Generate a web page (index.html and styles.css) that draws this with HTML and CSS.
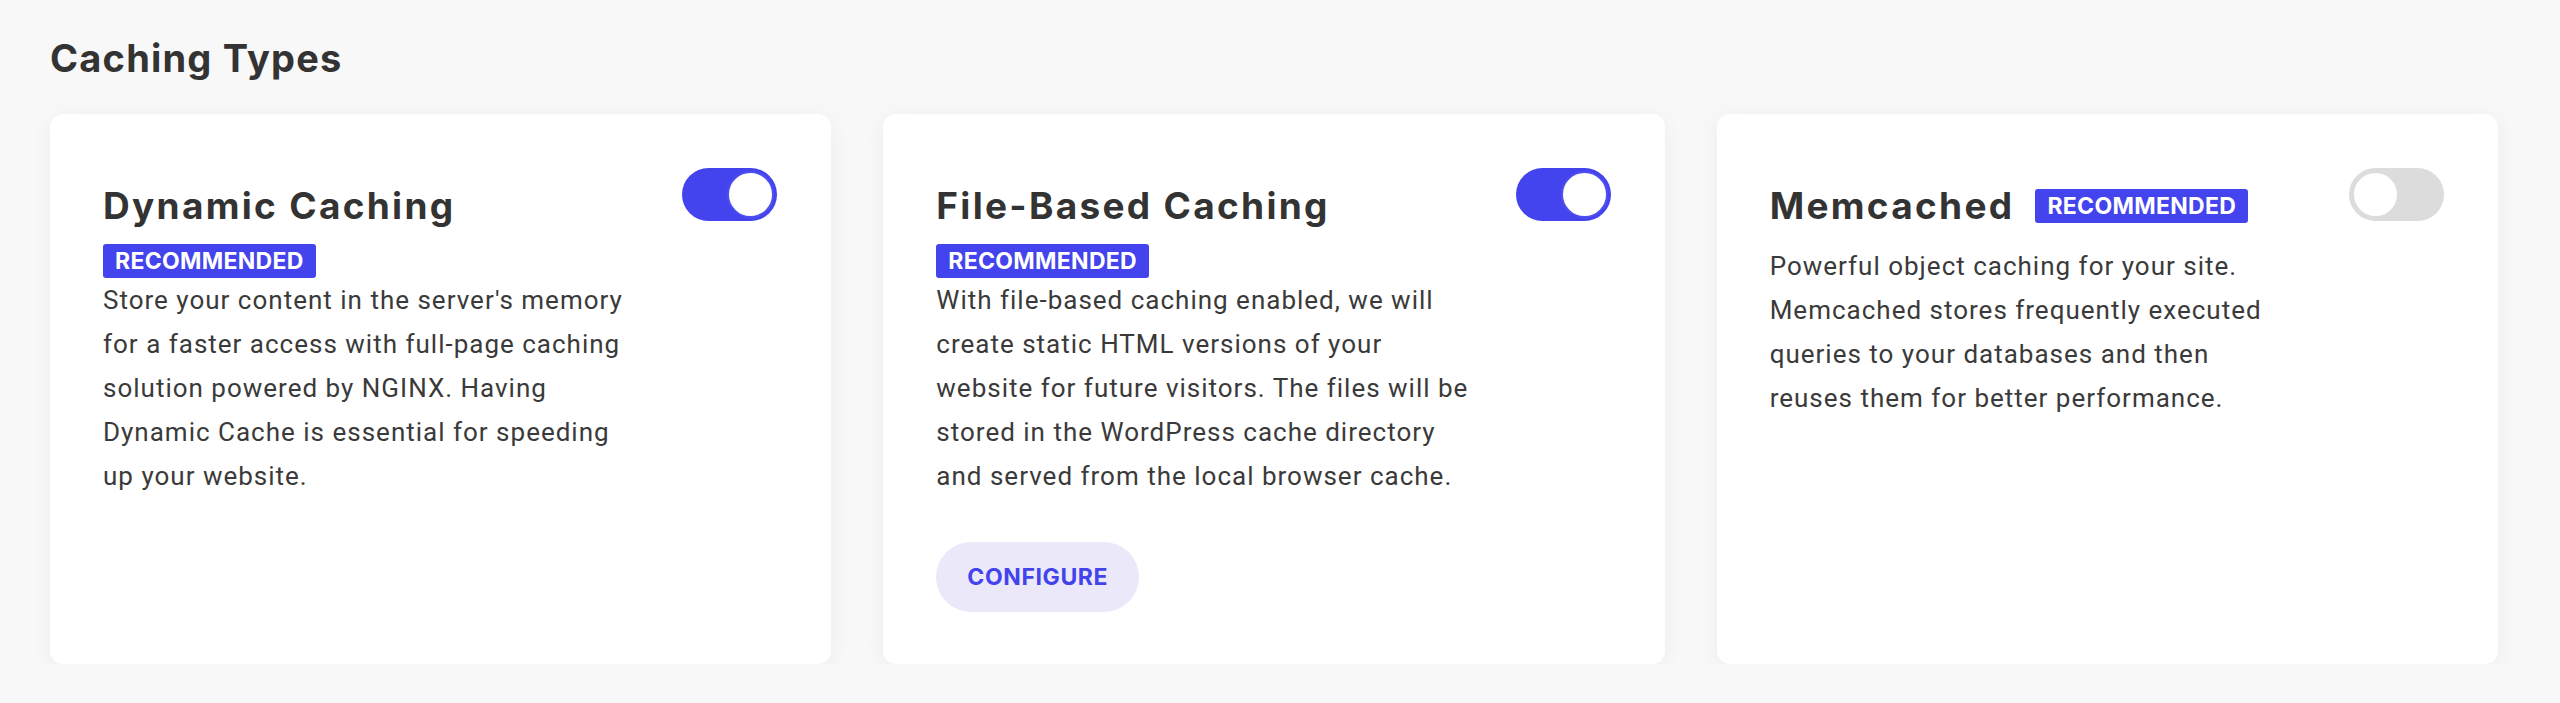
FILE: index.html
```html
<!DOCTYPE html>
<html lang="en">

<head>
    <meta charset="UTF-8">
    <meta name="viewport" content="width=device-width, initial-scale=1.0">
    <title>Caching Types</title>
    <link rel="stylesheet" href="styles.css">
</head>

<body>
    <main class="caching">
        <h2 class="section-title">Caching Types</h2>

        <div class="cards">
            <!-- Dynamic -->
            <div class="card">
                <div class="card-body">
                    <div class="card-title-row">
                        <h3>Dynamic Caching</h3>
                        <span class="badge">RECOMMENDED</span>
                    </div>
                    <p class="card-text">Store your content in the server's memory for a faster access with full-page caching solution powered by NGINX. Having Dynamic Cache is essential for speeding up your website.</p>
                </div>
                <button class="toggle is-on" aria-label="Dynamic Caching"><span class="knob"></span></button>
            </div>

            <!-- File based -->
            <div class="card">
                <div class="card-body">
                    <div class="card-title-row">
                        <h3>File-Based Caching</h3>
                        <span class="badge">RECOMMENDED</span>
                    </div>
                    <p class="card-text">With file-based caching enabled, we will create static HTML versions of your website for future visitors. The files will be stored in the WordPress cache directory and served from the local browser cache.</p>
                    <button class="configure-btn">CONFIGURE</button>
                </div>
                <button class="toggle is-on" aria-label="File-Based Caching"><span class="knob"></span></button>
            </div>

            <!-- Memcached -->
            <div class="card">
                <div class="card-body">
                    <div class="card-title-row">
                        <h3>Memcached</h3>
                        <span class="badge">RECOMMENDED</span>
                    </div>
                    <p class="card-text">Powerful object caching for your site. Memcached stores frequently executed queries to your databases and then<br>reuses them for better performance.</p>
                </div>
                <button class="toggle" aria-label="Memcached"><span class="knob"></span></button>
            </div>
        </div>
    </main>
</body>

</html>
```

FILE: styles.css
```css
* {
    margin: 0;
    padding: 0;
    box-sizing: border-box;
}

body {
    background: #f8f8f8;
    font-family: Roboto, 'Liberation Sans', sans-serif;
    color: #333;
}

.caching {
    padding: 36px 62px 0 50px;
}

.section-title {
    font-family: Inter, 'Liberation Sans', sans-serif;
    font-weight: 700;
    font-size: 38px;
    line-height: 1.2;
    letter-spacing: 1.2px;
    color: #333;
    margin-bottom: 32px;
}

.cards {
    display: grid;
    grid-template-columns: repeat(3, 1fr);
    gap: 52px;
}

.card {
    position: relative;
    display: flex;
    align-items: flex-start;
    justify-content: space-between;
    background: #fff;
    border-radius: 13px;
    padding: 54px 54px 52px 53px;
    box-shadow: 0 4px 22px rgba(0, 0, 0, 0.05);
}

/* thin straight line under the card */
.card::after {
    content: '';
    position: absolute;
    left: 0;
    right: 0;
    bottom: -1px;
    height: 1px;
    background: #e4e4e4;
}

.card-body {
    max-width: 538px;
}

.card-title-row {
    display: flex;
    flex-wrap: wrap;
    align-items: center;
    column-gap: 21px;
}

.card-title-row h3 {
    font-family: Inter, 'Liberation Sans', sans-serif;
    font-weight: 700;
    font-size: 37px;
    line-height: 76px;
    letter-spacing: 2.3px;
    color: #333;
}

.badge {
    display: inline-block;
    background: #4444ee;
    color: #fff;
    font-family: Inter, 'Liberation Sans', sans-serif;
    font-weight: 700;
    font-size: 23px;
    line-height: 34px;
    letter-spacing: 0.3px;
    padding: 0 12px;
    border-radius: 3px;
}

.card-text {
    font-size: 26px;
    line-height: 44px;
    letter-spacing: 1px;
    color: #3a3a3a;
}

.configure-btn {
    margin-top: 44px;
    height: 70px;
    padding: 0 31px;
    border: none;
    border-radius: 35px;
    background: #ebe8fa;
    color: #4343ec;
    font-family: Inter, 'Liberation Sans', sans-serif;
    font-weight: 700;
    font-size: 23px;
    letter-spacing: 0.6px;
    cursor: pointer;
}

.toggle {
    flex: none;
    display: flex;
    align-items: center;
    width: 95px;
    height: 53px;
    padding: 0 3px;
    border: none;
    border-radius: 27px;
    background: #dcdcdc;
    cursor: pointer;
}

.toggle .knob {
    width: 47px;
    height: 47px;
    border-radius: 50%;
    background: #fff;
    border: 2px solid #dcdcdc;
}

.toggle.is-on {
    justify-content: flex-end;
    background: #4444ee;
}

.toggle.is-on .knob {
    border-color: #4f4ff0;
}
```
